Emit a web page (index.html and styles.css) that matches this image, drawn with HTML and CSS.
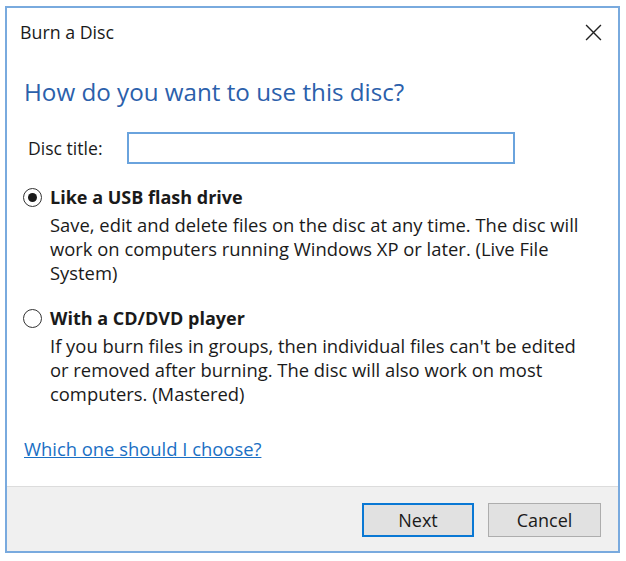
FILE: index.html
```html
<!DOCTYPE html>
<html>
<head>
<meta charset="utf-8">
<link rel="stylesheet" href="styles.css">
</head>
<body>
<div class="dialog">
  <div class="titlebar">
    <span class="title">Burn a Disc</span>
    <svg class="close" width="16" height="16" viewBox="0 0 16 16"><path d="M1 1 L15 15 M15 1 L1 15" stroke="#222" stroke-width="1.3" fill="none"/></svg>
  </div>
  <div class="content">
    <h1 class="heading">How do you want to use this disc?</h1>
    <div class="field">
      <label class="field-label">Disc title:</label>
      <div class="input"></div>
    </div>
    <div class="option first">
      <div class="option-head"><span class="radio checked"></span><span class="option-label">Like a USB flash drive</span></div>
      <p class="desc">Save, edit and delete files on the disc at any time. The disc will<br>work on computers running Windows XP or later. (Live File<br>System)</p>
    </div>
    <div class="option second">
      <div class="option-head"><span class="radio"></span><span class="option-label">With a CD/DVD player</span></div>
      <p class="desc">If you burn files in groups, then individual files can't be edited<br>or removed after burning. The disc will also work on most<br>computers. (Mastered)</p>
    </div>
    <a class="link" href="#">Which one should I choose?</a>
  </div>
  <div class="footer">
    <button class="btn primary">Next</button>
    <button class="btn">Cancel</button>
  </div>
</div>
</body>
</html>
```
FILE: styles.css
```css
html, body { margin: 0; padding: 0; background: #fff; }
body { font-family: "Open Sans", "Noto Sans", sans-serif; color: #1a1a1a; }
.dialog {
  margin: 6px 0 0 5px;
  width: 611px;
  height: 543px;
  border: 2px solid #79aade;
  display: flex;
  flex-direction: column;
  background: #fff;
}
.titlebar {
  height: 48px;
  display: flex;
  align-items: center;
  justify-content: space-between;
  padding: 0 16px 0 13px;
}
.title { font-size: 17.8px; color: #1a1a1a; }
.close { width: 17px; height: 17px; }
.content { flex: 1; padding: 0 17px; }
.heading {
  margin: 20px 0 0 0;
  font-size: 24.2px;
  line-height: 32px;
  font-weight: 400;
  color: #2b60ab;
}
.field { display: flex; align-items: center; margin-top: 24px; padding-left: 4px; }
.field-label { font-size: 17.6px; width: 99px; }
.input { width: 384px; height: 28px; border: 2px solid #6aa3dd; }
.option.first { margin-top: 21px; }
.option.second { margin-top: 21px; }
.option-head { display: flex; align-items: center; height: 24px; }
.radio {
  width: 19px; height: 19px; border: 1.5px solid #333; border-radius: 50%;
  margin-left: -1px; margin-right: 8px; display: flex; align-items: center; justify-content: center;
  box-sizing: border-box; flex: none;
}
.radio.checked::after { content: ""; width: 9px; height: 9px; border-radius: 50%; background: #1a1a1a; }
.option-label { font-size: 18px; font-weight: 700; line-height: 24px; }
.desc { margin: 4px 0 0 26px; font-size: 18.4px; line-height: 24px; white-space: nowrap; }
.link {
  display: inline-block; margin-top: 31px; font-size: 18.4px; line-height: 24px;
  color: #1a6fc4; text-decoration: underline;
}
.footer {
  height: 65px;
  border-top: 1px solid #dcdcdc;
  background: #f0f0f0;
  display: flex;
  justify-content: flex-end;
  align-items: flex-start;
  gap: 14px;
  padding: 16px 17px 0 0;
  box-sizing: border-box;
}
.btn {
  width: 113px; height: 34px; font-family: inherit; font-size: 18px; color: #1a1a1a;
  background: #e1e1e1; border: 1px solid #adadad; padding: 0;
}
.btn.primary { border: 2px solid #0a78d4; width: 112px; }
```
